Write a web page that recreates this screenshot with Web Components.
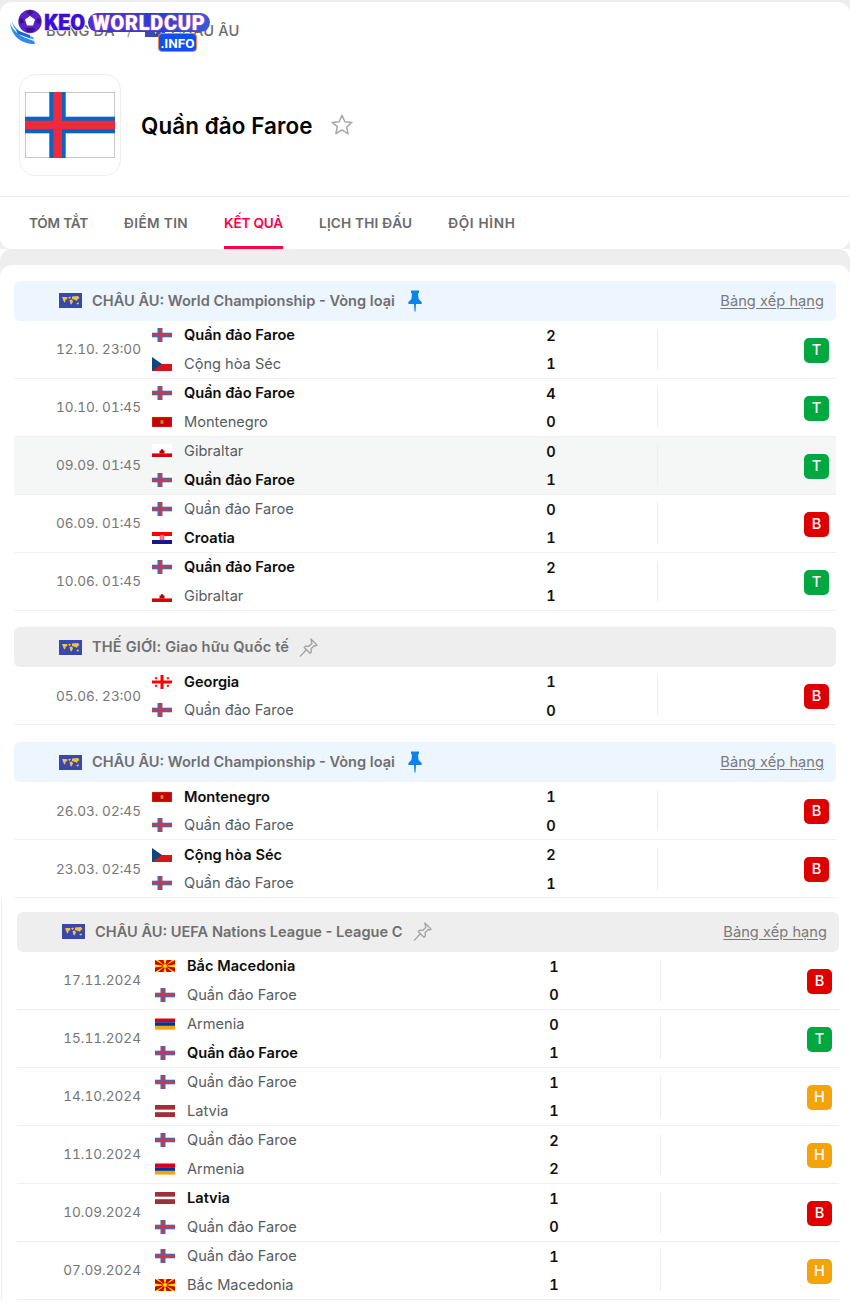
<!DOCTYPE html>
<html lang="vi"><head><meta charset="utf-8"><title>Quần đảo Faroe</title>
<style>
html,body{margin:0;padding:0;background:#fff}
body{width:850px;height:1303px;overflow:hidden;font-family:Inter,"Noto Sans",sans-serif;position:relative}
</style></head><body>
<fx-page>
  <fx-logo></fx-logo>
  <fx-hero name="Quần đảo Faroe"></fx-hero>
  <fx-results>
    <fx-group title="CHÂU ÂU: World Championship - Vòng loại" pinned standings>
      <fx-match date="12.10. 23:00" hs="2" as="1" result="T"><fx-team slot="home" flag="fo" win>Quần đảo Faroe</fx-team><fx-team slot="away" flag="cz">Cộng hòa Séc</fx-team></fx-match>
      <fx-match date="10.10. 01:45" hs="4" as="0" result="T"><fx-team slot="home" flag="fo" win>Quần đảo Faroe</fx-team><fx-team slot="away" flag="me">Montenegro</fx-team></fx-match>
      <fx-match date="09.09. 01:45" hs="0" as="1" result="T" live><fx-team slot="home" flag="gi">Gibraltar</fx-team><fx-team slot="away" flag="fo" win>Quần đảo Faroe</fx-team></fx-match>
      <fx-match date="06.09. 01:45" hs="0" as="1" result="B"><fx-team slot="home" flag="fo">Quần đảo Faroe</fx-team><fx-team slot="away" flag="hr" win>Croatia</fx-team></fx-match>
      <fx-match date="10.06. 01:45" hs="2" as="1" result="T"><fx-team slot="home" flag="fo" win>Quần đảo Faroe</fx-team><fx-team slot="away" flag="gi">Gibraltar</fx-team></fx-match>
    </fx-group>
    <fx-group title="THẾ GIỚI: Giao hữu Quốc tế" style="--ts:.15px">
      <fx-match date="05.06. 23:00" hs="1" as="0" result="B"><fx-team slot="home" flag="ge" win>Georgia</fx-team><fx-team slot="away" flag="fo">Quần đảo Faroe</fx-team></fx-match>
    </fx-group>
    <fx-group title="CHÂU ÂU: World Championship - Vòng loại" pinned standings style="margin-top:.5px">
      <fx-match date="26.03. 02:45" hs="1" as="0" result="B"><fx-team slot="home" flag="me" win>Montenegro</fx-team><fx-team slot="away" flag="fo">Quần đảo Faroe</fx-team></fx-match>
      <fx-match date="23.03. 02:45" hs="2" as="1" result="B"><fx-team slot="home" flag="cz" win>Cộng hòa Séc</fx-team><fx-team slot="away" flag="fo">Quần đảo Faroe</fx-team></fx-match>
    </fx-group>
  </fx-results>
  <fx-results older>
    <fx-group title="CHÂU ÂU: UEFA Nations League - League C" standings>
      <fx-match date="17.11.2024" hs="1" as="0" result="B"><fx-team slot="home" flag="mk" win>Bắc Macedonia</fx-team><fx-team slot="away" flag="fo">Quần đảo Faroe</fx-team></fx-match>
      <fx-match date="15.11.2024" hs="0" as="1" result="T"><fx-team slot="home" flag="am">Armenia</fx-team><fx-team slot="away" flag="fo" win>Quần đảo Faroe</fx-team></fx-match>
      <fx-match date="14.10.2024" hs="1" as="1" result="H"><fx-team slot="home" flag="fo">Quần đảo Faroe</fx-team><fx-team slot="away" flag="lv">Latvia</fx-team></fx-match>
      <fx-match date="11.10.2024" hs="2" as="2" result="H"><fx-team slot="home" flag="fo">Quần đảo Faroe</fx-team><fx-team slot="away" flag="am">Armenia</fx-team></fx-match>
      <fx-match date="10.09.2024" hs="1" as="0" result="B"><fx-team slot="home" flag="lv" win>Latvia</fx-team><fx-team slot="away" flag="fo">Quần đảo Faroe</fx-team></fx-match>
      <fx-match date="07.09.2024" hs="1" as="1" result="H"><fx-team slot="home" flag="fo">Quần đảo Faroe</fx-team><fx-team slot="away" flag="mk">Bắc Macedonia</fx-team></fx-match>
    </fx-group>
  </fx-results>
</fx-page>
<script>
const FLAGS={
fo:'<rect width="20" height="14" fill="#fff"/><rect x="5.5" width="5" height="14" fill="#3f6db5"/><rect y="4.7" width="20" height="4.6" fill="#3f6db5"/><rect x="6.8" width="2.4" height="14" fill="#c8384f"/><rect y="5.8" width="20" height="2.4" fill="#c8384f"/>',
cz:'<rect width="20" height="7" fill="#fff"/><rect y="7" width="20" height="7" fill="#d7141a"/><path d="M0 0l10 7-10 7z" fill="#11457e"/>',
me:'<rect y="2" width="20" height="10" fill="#c40308" stroke="#d3ae3b" stroke-width=".3"/><rect x="8.500" y="5" width="3" height="4" rx="1" fill="#b98a2a"/>',
gi:'<rect width="20" height="14" fill="#fff"/><rect y="9.4" width="20" height="3.6" fill="#da000c"/><path d="M7.5 9.5V6.5h1.4V5.200h2.200V6.500h1.400V9.500z" fill="#b3000a"/>',
hr:'<rect y="1" width="20" height="4" fill="#f00"/><rect y="5" width="20" height="4" fill="#fff"/><rect y="9" width="20" height="4" fill="#171796"/><rect x="8" y="4" width="4" height="5" fill="#e88" stroke="#c33" stroke-width=".5"/>',
ge:'<rect width="20" height="14" fill="#fff"/><rect x="8.500" width="3" height="14" fill="#f00"/><rect y="5.500" width="20" height="3" fill="#f00"/><g fill="#f00"><rect x="3.500" y="2" width="1.200" height="2.400"/><rect x="2.900" y="2.600" width="2.400" height="1.200"/><rect x="15.300" y="2" width="1.200" height="2.400"/><rect x="14.700" y="2.600" width="2.400" height="1.200"/><rect x="3.500" y="9.600" width="1.200" height="2.400"/><rect x="2.900" y="10.200" width="2.400" height="1.200"/><rect x="15.300" y="9.600" width="1.200" height="2.400"/><rect x="14.700" y="10.200" width="2.400" height="1.200"/></g>',
mk:'<rect y="1" width="20" height="12" fill="#d20000"/><path d="M0 1h3l7 6 7-6h3L10 7 20 13h-3l-7-6-7 6H0L10 7zM8.500 1h3L10 7zM8.500 13h3L10 7zM0 5.500 10 7 0 8.500zM20 5.500 10 7 20 8.500z" fill="#ffe600"/><circle cx="10" cy="7" r="2.200" fill="#ffe600" stroke="#d20000" stroke-width=".5"/>',
am:'<rect y="1.500" width="20" height="3.700" fill="#d90012"/><rect y="5.200" width="20" height="3.700" fill="#0033a0"/><rect y="8.900" width="20" height="3.700" fill="#f2a800"/>',
lv:'<rect y="1" width="20" height="4.800" fill="#9e3039"/><rect y="5.800" width="20" height="2.400" fill="#fff"/><rect y="8.200" width="20" height="4.800" fill="#9e3039"/>'
};
const WORLD='<svg viewBox="0 0 23 15" width="23" height="15" aria-hidden="true"><rect width="23" height="15" fill="#3949ab"/><path d="M3 4h5l.600 1.500-2 1.500-.6 2.500-1-.5L4 6.500zM9 4.500l2-1 1 1-1.500 1.500zM10.500 7l2.500-.5 1 2-1.500 3-1-.5zM13 3.500l6-.5 1.500 2-2 1.500-.5 1.500-1.500-1-2-.5-1.500-.5z" fill="#f0c14a"/><path d="M17.500 10l2-.5.500 1.500-2 .5z" fill="#f0c14a"/></svg>';
const PIN_ON='<svg viewBox="0 0 14 22" width="14" height="22" aria-hidden="true"><path d="M3 0.500h8v2L10 4l.6 5 3 3v2H8l-.5 7.500h-1L6 14H.4v-2l3-3L4 4 3 2.500z" fill="#0a84e6"/></svg>';
const PIN_OFF='<svg viewBox="0 0 22 22" width="21" height="21" aria-hidden="true"><g fill="none" stroke="#a3a3a3" stroke-width="1.400" stroke-linejoin="round" stroke-linecap="round"><path d="M13.500 2l6.500 6.500-1.700.8-1.200-.4-3.400 3.400.3 3.300-1.400 1.400L6.500 11.000l1.400-1.400 3.300.3 3.400-3.400-.4-1.200z"/><path d="M8.800 13.300 2.500 20"/></g></svg>';

function def(name,css,html){
  customElements.define(name,class extends HTMLElement{
    connectedCallback(){
      if(this.shadowRoot)return;
      const r=this.attachShadow({mode:'open'});
      r.innerHTML='<style>'+css+'</style>'+(typeof html==='function'?html(this):html);
    }
  });
}
def('fx-page',':host{display:block;background:#fff;position:relative}','<slot></slot>');
def('fx-logo',`:host{position:absolute;left:10px;top:9px;width:202px;height:44px;z-index:5;display:block;font-family:Roboto,Inter,sans-serif}
 svg{position:absolute;left:0;top:0}
 .k,.w,.i{position:absolute;font-weight:900;white-space:nowrap}
 .k{left:34px;top:1px;font-size:21.500px;line-height:26px;color:#3a10d6;-webkit-text-stroke:.5px #3a10d6;text-shadow:1px 0 #fff,-1px 0 #fff,0 1px #fff,0 -1px #fff;letter-spacing:.2px}
 .w{left:78px;top:4px;width:122px;height:19px;border-radius:10px;background:linear-gradient(90deg,#4a2fd8,#2340d8 60%,#3a58e0);color:#fff;font-size:20px;line-height:20px;text-align:center;text-shadow:0 0 2px #f06ab0,0 0 1px #f06ab0;letter-spacing:.7px}
 .i{left:148px;top:24px;width:37px;height:17px;border-radius:4px;background:#1050f0;border:1px solid #f08a3a;color:#fff;font-size:13.500px;font-weight:700;line-height:18px;text-align:center}`,
 `<svg viewBox="0 0 34 36" width="34" height="36" aria-hidden="true"><path d="M0 13c1 7 8 14 24 19l1 3C11 35 1 27 0 13z" fill="#2c8de8"/><path d="M2 12c2 7 9 13 21 16l1 2.500C11 28 3 21 2 12z" fill="#3aa0f0"/><path d="M6 21l14 5v3L8 25z" fill="#2266cc"/><circle cx="20" cy="12.500" r="11.700" fill="#5b22c8"/><path d="M20 7l5 3.500-2 6h-6l-2-6z" fill="#fff"/><path d="M20 .8l4 2.500-4 3-4-3zM31 10l-1 5-4-1.500 1-4.500zM9 10l1 5 4-1.500-1-4.500zM15 19l10 0-2 4h-6z" fill="#3d128f"/></svg>
 <span class="k">KEO</span><span class="w">WORLDCUP</span><span class="i">.INFO</span>`);
def('fx-breadcrumb',`:host{display:flex;align-items:center;height:56px;padding-left:46px;font-size:14.600px;font-weight:500;color:#6b6b6b;letter-spacing:.2px;box-sizing:border-box;padding-top:1px}
 .s{margin:0 13px 0 12px;color:#9a9a9a;font-size:13px} .f{margin-right:6px;display:flex}`,
 `<span>BÓNG ĐÁ</span><span class="s">/</span><span class="f">${WORLD.replace('width="23" height="15"','width="20" height="13"')}</span><span>CHÂU ÂU</span>`);
def('fx-hero',`:host{display:block;background:#eee;padding-top:2px}
 .card{background:#fff;border-radius:12px;height:247px;box-sizing:border-box;overflow:hidden}
 .head{display:flex;align-items:center;height:139px;padding:16px 0 20px 19px;box-sizing:border-box;border-bottom:1px solid #eee}
 .box{width:102px;height:102px;box-sizing:border-box;border:1px solid #eee;border-radius:16px;display:flex;align-items:center;justify-content:center}
 h1{margin:2px 0 0 20px;font-size:22.400px;line-height:28px;font-weight:600;color:#000;letter-spacing:.1px}
 .star{margin-left:17px;display:flex}`,
 t=>`<div class="card"><fx-breadcrumb></fx-breadcrumb><div class="head"><div class="box"><svg viewBox="0 0 90 66" width="90" height="66" aria-hidden="true"><rect x=".5" y=".5" width="89" height="65" fill="#fff" stroke="#c8c8c8"/><rect x="24.300" width="16.400" height="66" fill="#0b63bd"/><rect y="24.700" width="90" height="16.600" fill="#0b63bd"/><rect x="28.300" width="8.700" height="66" fill="#ee2a3d"/><rect y="28.700" width="90" height="8.600" fill="#ee2a3d"/></svg></div><h1>${t.getAttribute('name')}</h1><span class="star"><svg viewBox="0 0 24 24" width="24" height="24" aria-hidden="true"><path d="M12 2.200l2.900 6.500 7 .7-5.300 4.700 1.500 6.900L12 16.900l-6.100 3.600 1.500-6.900L2.100 9.400l7-.7z" fill="none" stroke="#a8a8a8" stroke-width="1.500" stroke-linejoin="round"/></svg></span></div><fx-tabs></fx-tabs></div>`);
def('fx-tabs',`:host{display:flex;height:52px;padding-left:11px;font-size:13.600px;font-weight:600;color:#6a6a6a;box-sizing:border-box}
 a{display:flex;align-items:center;margin:0 18px;height:52px;box-sizing:border-box;padding-top:3px;border-bottom:3px solid transparent;white-space:nowrap}
 a.on{color:#ff0046;border-bottom-color:#ff0046}`,
 `<a style="letter-spacing:-.2px">TÓM TẮT</a><a style="letter-spacing:.4px">ĐIỂM TIN</a><a class="on" style="letter-spacing:-.2px">KẾT QUẢ</a><a style="letter-spacing:.2px">LỊCH THI ĐẤU</a><a style="letter-spacing:.7px">ĐỘI HÌNH</a>`);
def('fx-results',`:host{display:flex;flex-direction:column;gap:16.500px;padding:15.500px 14px 0;background:#fff;border-radius:12px 12px 0 0;box-sizing:border-box;position:relative;--dw:127px;--tm:11px}
 :host(:not([older])){box-shadow:0 -16px 0 #eee;margin-top:16px}
 :host([older]){margin:13.500px 0 0 3px;padding:0 11px 0 14px;width:847px;border-radius:0;--dw:124px;--tm:14px}
 :host([older])::before{content:"";position:absolute;left:-2px;top:-13px;bottom:0;width:1px;background:#eee}`,'<slot></slot>');
def('fx-group',`:host{display:block}
 .h{display:flex;align-items:center;height:40px;background:#eee;border-radius:6px;padding:0 12px 0 45px;color:#6f6f6f;font-size:14.600px;font-weight:600;box-sizing:border-box}
 :host([pinned]) .h{background:#edf5ff}
 .w{display:flex;margin-right:10px}
 .t{white-space:nowrap;letter-spacing:var(--ts,0)}
 .p{display:flex;margin-left:13px}
 :host(:not([pinned])) .p{margin-left:9px}
 .l{margin-left:auto;font-weight:400;text-decoration:underline;text-underline-offset:2px;color:#7a7a7a;letter-spacing:.05px}`,
 t=>`<div class="h"><span class="w">${WORLD}</span><span class="t">${t.getAttribute('title')}</span><span class="p">${t.hasAttribute('pinned')?PIN_ON:PIN_OFF}</span>${t.hasAttribute('standings')?'<span class="l">Bảng xếp hạng</span>':''}</div><slot></slot>`);
def('fx-match',`:host{display:flex;align-items:center;height:58px;box-sizing:border-box;border-bottom:1px solid #f0f0f0}
 :host([live]){background:#f5f7f6}
 .d{width:var(--dw);flex:none;text-align:right;color:#767676;font-size:13.600px;font-variant-numeric:tabular-nums;font-feature-settings:"tnum";white-space:nowrap}
 .t{flex:1;margin-left:var(--tm);display:flex;flex-direction:column;padding-top:1px}
 .s{width:32px;flex:none;display:flex;flex-direction:column;text-align:center;font-size:14.600px;font-weight:600;color:#111;line-height:28.500px;padding-top:2px;font-feature-settings:"tnum"}
 .v{width:1px;height:41px;background:#eee;margin-left:90px;flex:none}
 .b{width:25px;height:25px;flex:none;margin:2px 7px 0 146px;border-radius:5px;color:#fff;font-size:14.600px;font-weight:500;line-height:25px;text-align:center}
 .T{background:#00a83f}.B{background:#dc0000}.H{background:#f5a30a}`,
 t=>{const r=t.getAttribute('result');return `<span class="d">${t.getAttribute('date')}</span><div class="t"><slot name="home"></slot><slot name="away"></slot></div><div class="s"><span>${t.getAttribute('hs')}</span><span>${t.getAttribute('as')}</span></div><span class="v"></span><span class="b ${r}">${r}</span>`});
def('fx-team',`:host{display:flex;align-items:center;height:28.500px;font-size:14.600px;color:#555c63;white-space:nowrap}
 :host([win]){color:#0d0d0d;font-weight:600}
 svg{margin-right:12px;flex:none;display:block}`,
 t=>`<svg viewBox="0 0 20 14" width="20" height="14" aria-hidden="true">${FLAGS[t.getAttribute('flag')]}</svg><slot></slot>`);
</script>
</body></html>
